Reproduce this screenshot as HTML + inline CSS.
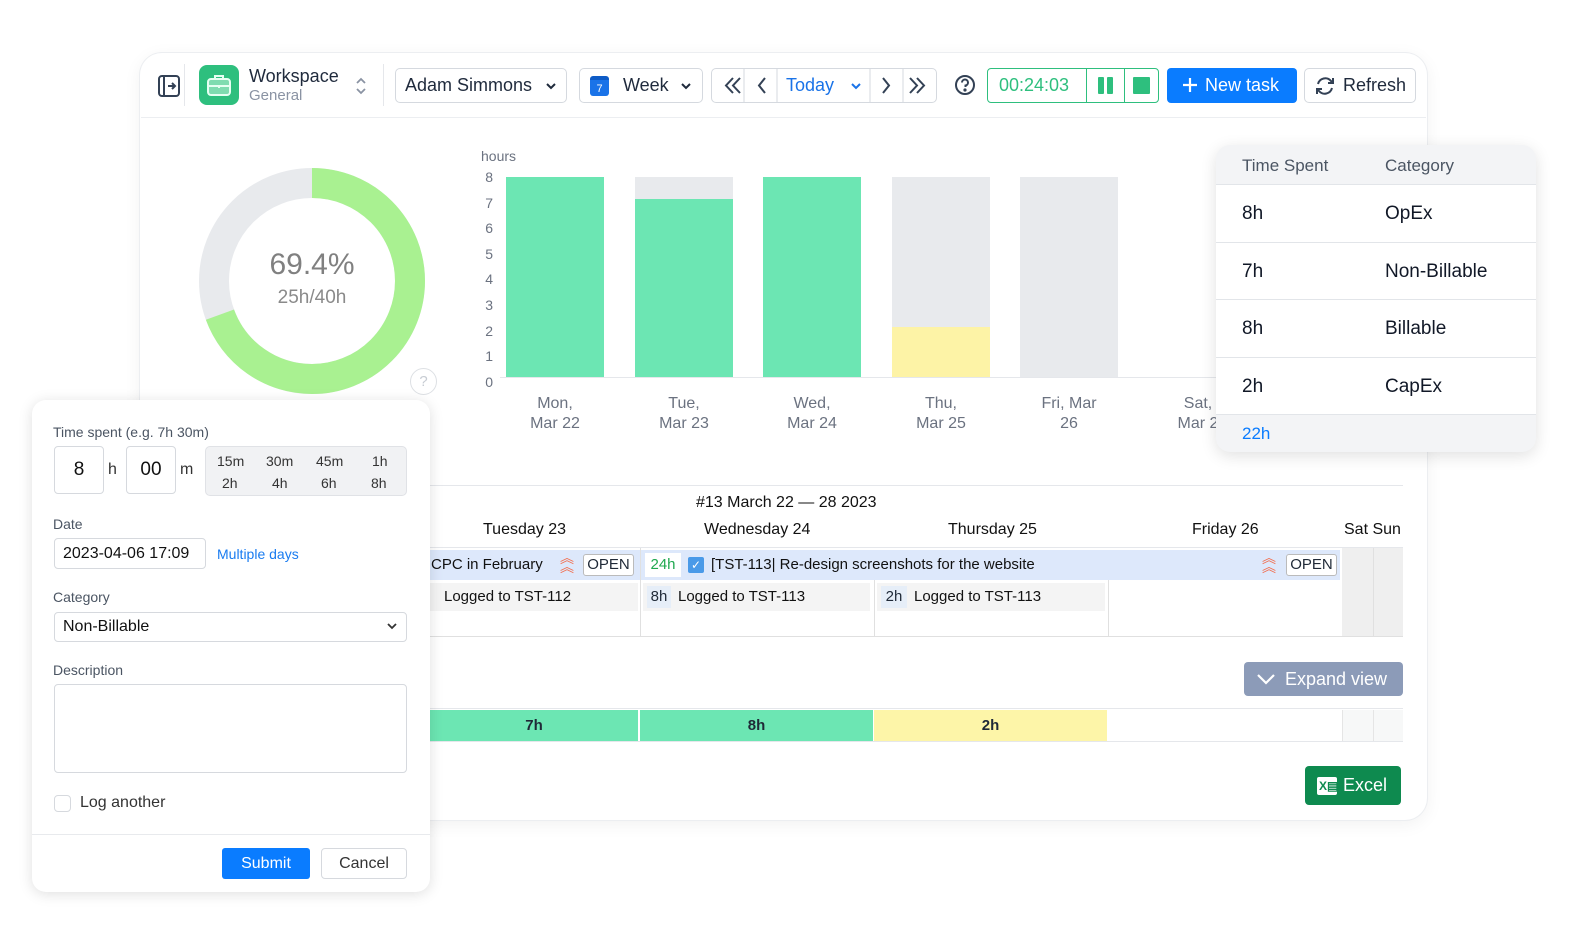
<!DOCTYPE html>
<html><head><meta charset="utf-8"><style>
*{box-sizing:border-box;margin:0;padding:0}
body{width:1584px;height:944px;background:#fff;font-family:"Liberation Sans",sans-serif;position:relative;overflow:hidden;color:#1f2937}
.a{position:absolute}
.card{left:140px;top:53px;width:1287px;height:767px;border-radius:22px;background:#fff;box-shadow:0 0 0 1px #eceef1,0 4px 18px rgba(0,0,0,.06)}
.btn{position:absolute;border:1px solid #d5d9df;border-radius:5px;background:#fff;height:35px;top:68px;display:flex;align-items:center;font-size:18px;color:#1f2a3c}
.ax{font-size:14px;color:#6b7280;width:14px;text-align:right}
.bar{position:absolute;width:98px}
.xl{position:absolute;font-size:16px;color:#6b7280;text-align:center;width:110px;line-height:20px}
.row{position:absolute;left:1216px;width:320px;border-top:1px solid #e2e5e9;height:58px;font-size:19px;color:#111827;display:flex;align-items:center}
.lbl{position:absolute;font-size:14px;color:#4b5563}
.inp{position:absolute;border:1px solid #d6d9de;border-radius:4px;background:#fff}
.dh{position:absolute;top:521px;font-size:16px;color:#111;}
</style></head><body>
<div class="a card"></div>
<div class="a" style="left:141px;top:117px;width:1285px;height:1px;background:#eceef1"></div>
<!-- header -->
<svg class="a" style="left:157px;top:74px" width="24" height="24" viewBox="0 0 24 24" fill="none" stroke="#334155" stroke-width="2"><rect x="2" y="2" width="20" height="20" rx="3"/><path d="M7 2v20M11 12h7M15 9l3 3-3 3"/></svg>
<div class="a" style="left:184px;top:64px;width:1px;height:42px;background:#e5e7eb"></div>
<div class="a" style="left:199px;top:65px;width:40px;height:40px;border-radius:8px;background:#2ebf7e"></div>
<svg class="a" style="left:206px;top:73px" width="26" height="24" viewBox="0 0 26 24" fill="none" stroke="#e6fff2" stroke-width="2"><rect x="2" y="6" width="22" height="16" rx="3" fill="#7fdcb0"/><path d="M9 6V3h8v3M2 13h22M13 12v3"/></svg>
<div class="a" style="left:249px;top:66px;font-size:18px;color:#1f2a3c">Workspace</div>
<div class="a" style="left:249px;top:87px;font-size:15px;color:#8a93a3">General</div>
<svg class="a" style="left:355px;top:76px" width="12" height="20" fill="none" stroke="#8a93a3" stroke-width="1.8"><path d="M2 7l4-4 4 4M2 13l4 4 4-4"/></svg>
<div class="a" style="left:383px;top:64px;width:1px;height:42px;background:#e5e7eb"></div>
<div class="btn" style="left:395px;width:172px;padding-left:9px">Adam Simmons</div>
<svg class="a" style="left:545px;top:82px" width="12" height="8" fill="none" stroke="#1f2a3c" stroke-width="2"><path d="M2 2l4 4 4-4"/></svg>
<div class="btn" style="left:579px;width:124px;padding-left:10px"><span style="display:inline-block;width:19px;height:20px;background:#1a73e8;border-radius:3px;color:#fff;font-size:11px;text-align:center;line-height:18px;margin-right:14px;border-top:4px solid #0d5bc6">7</span>Week</div>
<svg class="a" style="left:680px;top:82px" width="12" height="8" fill="none" stroke="#1f2a3c" stroke-width="2"><path d="M2 2l4 4 4-4"/></svg>
<div class="btn" style="left:711px;width:226px"></div>
<svg class="a" style="left:711px;top:68px" width="226" height="35" fill="none" stroke="#334155" stroke-width="2"><path d="M22 10l-7 7.5 7 7.5M29 10l-7 7.5 7 7.5M54 10l-6 7.5 6 7.5M172 10l6 7.5-6 7.5M199 10l7 7.5-7 7.5M206 10l7 7.5-7 7.5"/><path d="M33 0v35M66 0v35M159 0v35M192 0v35" stroke="#d5d9df" stroke-width="1"/><path d="M141 16l4 4 4-4" stroke="#1a73e8"/></svg>
<div class="a" style="left:786px;top:75px;font-size:18px;color:#1a73e8">Today</div>
<svg class="a" style="left:954px;top:74px" width="22" height="22" fill="none" stroke="#334155" stroke-width="2"><circle cx="11" cy="11" r="9"/><path d="M8 8.5a3 3 0 1 1 3.5 3V13"/><circle cx="11" cy="16" r=".6" fill="#334155"/></svg>
<div class="a" style="left:987px;top:68px;width:172px;height:35px;border:1px solid #2ebf7e;border-radius:4px"></div>
<div class="a" style="left:1086px;top:68px;width:1px;height:35px;background:#2ebf7e"></div>
<div class="a" style="left:1124px;top:68px;width:1px;height:35px;background:#2ebf7e"></div>
<div class="a" style="left:999px;top:75px;font-size:18px;color:#2ebf7e">00:24:03</div>
<div class="a" style="left:1098px;top:77px;width:6px;height:17px;background:#2ebf7e;border-radius:1px"></div>
<div class="a" style="left:1107px;top:77px;width:6px;height:17px;background:#2ebf7e;border-radius:1px"></div>
<div class="a" style="left:1133px;top:77px;width:17px;height:17px;background:#2ebf7e;border-radius:1px"></div>
<div class="a" style="left:1167px;top:68px;width:130px;height:35px;background:#0a7cff;border-radius:4px;color:#fff;font-size:18px;line-height:35px;padding-left:38px">New task</div>
<svg class="a" style="left:1181px;top:76px" width="18" height="18" stroke="#fff" stroke-width="2.2"><path d="M9 2v14M2 9h14"/></svg>
<div class="btn" style="left:1304px;width:112px;padding-left:38px">Refresh</div>
<svg class="a" style="left:1314px;top:75px" width="22" height="22" fill="none" stroke="#334155" stroke-width="2"><path d="M4 9a7.5 7.5 0 0 1 13-3l2 2M18 13a7.5 7.5 0 0 1-13 3l-2-2M19 3v5h-5M3 19v-5h5"/></svg>
<!-- donut -->
<svg class="a" style="left:198px;top:167px" width="228" height="228"><circle cx="114" cy="114" r="98" fill="none" stroke="#e8eaed" stroke-width="30"/><circle cx="114" cy="114" r="98" fill="none" stroke="#a9f191" stroke-width="30" stroke-dasharray="427.3 616" transform="rotate(-90 114 114)"/></svg>
<div class="a" style="left:212px;top:248px;width:200px;text-align:center;font-size:30px;color:#808080">69.4%</div>
<div class="a" style="left:212px;top:287px;width:200px;text-align:center;font-size:19px;color:#8a8a8a">25h/40h</div>
<div class="a" style="left:410px;top:368px;width:27px;height:27px;border:1px solid #dde0e4;border-radius:50%;color:#c7ccd3;font-size:15px;text-align:center;line-height:25px">?</div>
<!-- chart -->
<div class="a" style="left:481px;top:148px;font-size:14px;color:#6b7280">hours</div>
<div class="a ax" style="left:479px;top:169px">8</div><div class="a ax" style="left:479px;top:195px">7</div><div class="a ax" style="left:479px;top:220px">6</div><div class="a ax" style="left:479px;top:246px">5</div><div class="a ax" style="left:479px;top:271px">4</div><div class="a ax" style="left:479px;top:297px">3</div><div class="a ax" style="left:479px;top:323px">2</div><div class="a ax" style="left:479px;top:348px">1</div><div class="a ax" style="left:479px;top:374px">0</div>
<div class="bar" style="left:506px;top:177px;height:200px;background:#6ce6b3"></div>
<div class="bar" style="left:635px;top:177px;height:22px;background:#e8eaed"></div>
<div class="bar" style="left:635px;top:199px;height:178px;background:#6ce6b3"></div>
<div class="bar" style="left:763px;top:177px;height:200px;background:#6ce6b3"></div>
<div class="bar" style="left:892px;top:177px;height:150px;background:#e8eaed"></div>
<div class="bar" style="left:892px;top:327px;height:50px;background:#fdf3a6"></div>
<div class="bar" style="left:1020px;top:177px;height:200px;background:#e8eaed"></div>
<div class="a" style="left:500px;top:377px;width:716px;height:1px;background:#e5e7eb"></div>
<div class="xl" style="left:500px;top:394px">Mon,<br>Mar 22</div>
<div class="xl" style="left:629px;top:394px">Tue,<br>Mar 23</div>
<div class="xl" style="left:757px;top:394px">Wed,<br>Mar 24</div>
<div class="xl" style="left:886px;top:394px">Thu,<br>Mar 25</div>
<div class="xl" style="left:1014px;top:394px">Fri, Mar<br>26</div>
<div class="xl" style="left:1143px;top:394px">Sat,<br>Mar 2</div>
<!-- table popup -->
<div class="a" style="left:1216px;top:145px;width:320px;height:307px;border-radius:14px;background:#f3f4f6;box-shadow:0 4px 16px rgba(0,0,0,.12);overflow:hidden">
<div style="position:absolute;left:0;top:39px;width:320px;height:231px;background:#fff"></div></div>
<div class="a" style="left:1242px;top:156px;font-size:17px;color:#4b5563">Time Spent</div>
<div class="a" style="left:1385px;top:156px;font-size:17px;color:#4b5563">Category</div>
<div class="row" style="top:184px"><span style="margin-left:26px;width:143px">8h</span>OpEx</div>
<div class="row" style="top:242px"><span style="margin-left:26px;width:143px">7h</span>Non-Billable</div>
<div class="row" style="top:299px"><span style="margin-left:26px;width:143px">8h</span>Billable</div>
<div class="row" style="top:357px"><span style="margin-left:26px;width:143px">2h</span>CapEx</div>
<div class="a" style="left:1216px;top:414px;width:320px;height:1px;background:#e2e5e9"></div>
<div class="a" style="left:1242px;top:424px;font-size:17px;color:#0a7cff">22h</div>
<!-- calendar -->
<div class="a" style="left:430px;top:485px;width:973px;height:1px;background:#e5e7eb"></div>
<div class="a" style="left:696px;top:494px;font-size:16px;color:#111">#13 March 22 — 28 2023</div>
<div class="dh" style="left:483px">Tuesday 23</div><div class="dh" style="left:704px">Wednesday 24</div><div class="dh" style="left:948px">Thursday 25</div><div class="dh" style="left:1192px">Friday 26</div><div class="dh" style="left:1344px">Sat Sun</div>
<div class="a" style="left:430px;top:547px;width:973px;height:1px;background:#e5e7eb"></div>
<div class="a" style="left:1342px;top:548px;width:61px;height:88px;background:#efefef"></div>
<div class="a" style="left:1373px;top:548px;width:1px;height:88px;background:#e0e0e0"></div>
<div class="a" style="left:430px;top:550px;width:910px;height:30px;background:#dde8fb"></div>
<div class="a" style="left:431px;top:556px;font-size:15px;color:#111">CPC in February</div>
<div class="a" style="left:560px;top:554px;color:#f26b4a;font-size:14px;line-height:9px">︽<br>︽</div>
<div class="a" style="left:583px;top:554px;width:51px;height:22px;border:1px solid #bbb;border-radius:3px;background:#fff;font-size:15px;text-align:center;line-height:20px">OPEN</div>
<div class="a" style="left:645px;top:553px;width:36px;height:24px;background:#fff;color:#1fa84f;font-size:15px;text-align:center;line-height:24px">24h</div>
<div class="a" style="left:688px;top:557px;width:16px;height:16px;background:#4a9ae8;border-radius:2px;color:#fff;font-size:12px;text-align:center;line-height:16px">✓</div>
<div class="a" style="left:711px;top:556px;font-size:15px;color:#111">[TST-113| Re-design screenshots for the website</div>
<div class="a" style="left:1262px;top:554px;color:#f26b4a;font-size:14px;line-height:9px">︽<br>︽</div>
<div class="a" style="left:1286px;top:554px;width:51px;height:22px;border:1px solid #bbb;border-radius:3px;background:#fff;font-size:15px;text-align:center;line-height:20px">OPEN</div>
<div class="a" style="left:430px;top:583px;width:208px;height:28px;background:#f4f4f4"></div>
<div class="a" style="left:643px;top:583px;width:227px;height:28px;background:#f4f4f4"></div>
<div class="a" style="left:877px;top:583px;width:228px;height:28px;background:#f4f4f4"></div>
<div class="a" style="left:444px;top:588px;font-size:15px;color:#111">Logged to TST-112</div>
<div class="a" style="left:647px;top:586px;width:24px;height:22px;background:#e6eef8;font-size:15px;text-align:center;line-height:22px">8h</div>
<div class="a" style="left:678px;top:588px;font-size:15px;color:#111">Logged to TST-113</div>
<div class="a" style="left:881px;top:586px;width:26px;height:22px;background:#e6eef8;font-size:15px;text-align:center;line-height:22px">2h</div>
<div class="a" style="left:914px;top:588px;font-size:15px;color:#111">Logged to TST-113</div>
<div class="a" style="left:640px;top:548px;width:1px;height:88px;background:#e0e0e0"></div>
<div class="a" style="left:874px;top:580px;width:1px;height:56px;background:#e0e0e0"></div>
<div class="a" style="left:1108px;top:580px;width:1px;height:56px;background:#e0e0e0"></div>
<div class="a" style="left:430px;top:636px;width:973px;height:1px;background:#e0e0e0"></div>
<div class="a" style="left:1244px;top:662px;width:159px;height:34px;background:#8c9bb8;border-radius:4px;color:#fff;font-size:18px;line-height:34px;padding-left:41px">Expand view</div>
<svg class="a" style="left:1256px;top:671px" width="20" height="16" fill="none" stroke="#fff" stroke-width="2.2"><path d="M2 4l8 8 8-8"/></svg>
<div class="a" style="left:430px;top:708px;width:973px;height:1px;background:#e5e7eb"></div>
<div class="a" style="left:430px;top:710px;width:208px;height:31px;background:#6ce6b3;text-align:center;line-height:31px;font-size:15px;font-weight:bold">7h</div>
<div class="a" style="left:640px;top:710px;width:233px;height:31px;background:#6ce6b3;text-align:center;line-height:31px;font-size:15px;font-weight:bold">8h</div>
<div class="a" style="left:874px;top:710px;width:233px;height:31px;background:#fdf5a8;text-align:center;line-height:31px;font-size:15px;font-weight:bold">2h</div>
<div class="a" style="left:1342px;top:710px;width:61px;height:31px;background:#f7f8f8;border-left:1px solid #e5e5e5"></div>
<div class="a" style="left:1373px;top:710px;width:1px;height:31px;background:#e5e5e5"></div>
<div class="a" style="left:430px;top:741px;width:973px;height:1px;background:#e5e7eb"></div>
<div class="a" style="left:1305px;top:766px;width:96px;height:39px;background:#0e8a4f;border-radius:4px;color:#fff;font-size:18px;line-height:39px;padding-left:38px">Excel</div>
<div class="a" style="left:1317px;top:777px;width:20px;height:18px;background:#fff;border-radius:2px;color:#0e8a4f;font-size:12px;font-weight:bold;line-height:18px;padding-left:2px">X▤</div>
<!-- form popup -->
<div class="a" style="left:32px;top:400px;width:398px;height:492px;background:#fff;border-radius:14px;box-shadow:0 2px 14px rgba(0,0,0,.13)"></div>
<div class="lbl" style="left:53px;top:424px">Time spent (e.g. 7h 30m)</div>
<div class="inp" style="left:54px;top:446px;width:50px;height:48px;font-size:19px;text-align:center;line-height:46px;color:#111">8</div>
<div class="a" style="left:108px;top:461px;font-size:16px;color:#333">h</div>
<div class="inp" style="left:126px;top:446px;width:50px;height:48px;font-size:19px;text-align:center;line-height:46px;color:#111">00</div>
<div class="a" style="left:180px;top:461px;font-size:16px;color:#333">m</div>
<div class="a" style="left:205px;top:446px;width:202px;height:50px;background:#f1f2f4;border:1px solid #e0e2e6;border-radius:5px;font-size:14px;color:#333">
<span class="a" style="left:11px;top:6px">15m</span><span class="a" style="left:60px;top:6px">30m</span><span class="a" style="left:110px;top:6px">45m</span><span class="a" style="left:166px;top:6px">1h</span>
<span class="a" style="left:16px;top:28px">2h</span><span class="a" style="left:66px;top:28px">4h</span><span class="a" style="left:115px;top:28px">6h</span><span class="a" style="left:165px;top:28px">8h</span></div>
<div class="lbl" style="left:53px;top:516px">Date</div>
<div class="inp" style="left:54px;top:538px;width:152px;height:31px;font-size:16px;line-height:29px;padding-left:8px;color:#111">2023-04-06 17:09</div>
<div class="a" style="left:217px;top:546px;font-size:14px;color:#1a7cf0">Multiple days</div>
<div class="lbl" style="left:53px;top:589px">Category</div>
<div class="inp" style="left:54px;top:612px;width:353px;height:30px;font-size:16px;line-height:28px;padding-left:8px;color:#111">Non-Billable</div>
<svg class="a" style="left:387px;top:622px" width="10" height="8" fill="none" stroke="#333" stroke-width="1.8"><path d="M1 2l4 4 4-4"/></svg>
<div class="lbl" style="left:53px;top:662px">Description</div>
<div class="inp" style="left:54px;top:684px;width:353px;height:89px"></div>
<div class="inp" style="left:54px;top:795px;width:17px;height:17px"></div>
<div class="a" style="left:80px;top:794px;font-size:16px;color:#333">Log another</div>
<div class="a" style="left:32px;top:834px;width:398px;height:1px;background:#e8eaed"></div>
<div class="a" style="left:222px;top:848px;width:88px;height:31px;background:#0a7cff;border-radius:3px;color:#fff;font-size:16px;text-align:center;line-height:31px">Submit</div>
<div class="inp" style="left:321px;top:848px;width:86px;height:31px;font-size:16px;text-align:center;line-height:29px;color:#333">Cancel</div>
</body></html>
